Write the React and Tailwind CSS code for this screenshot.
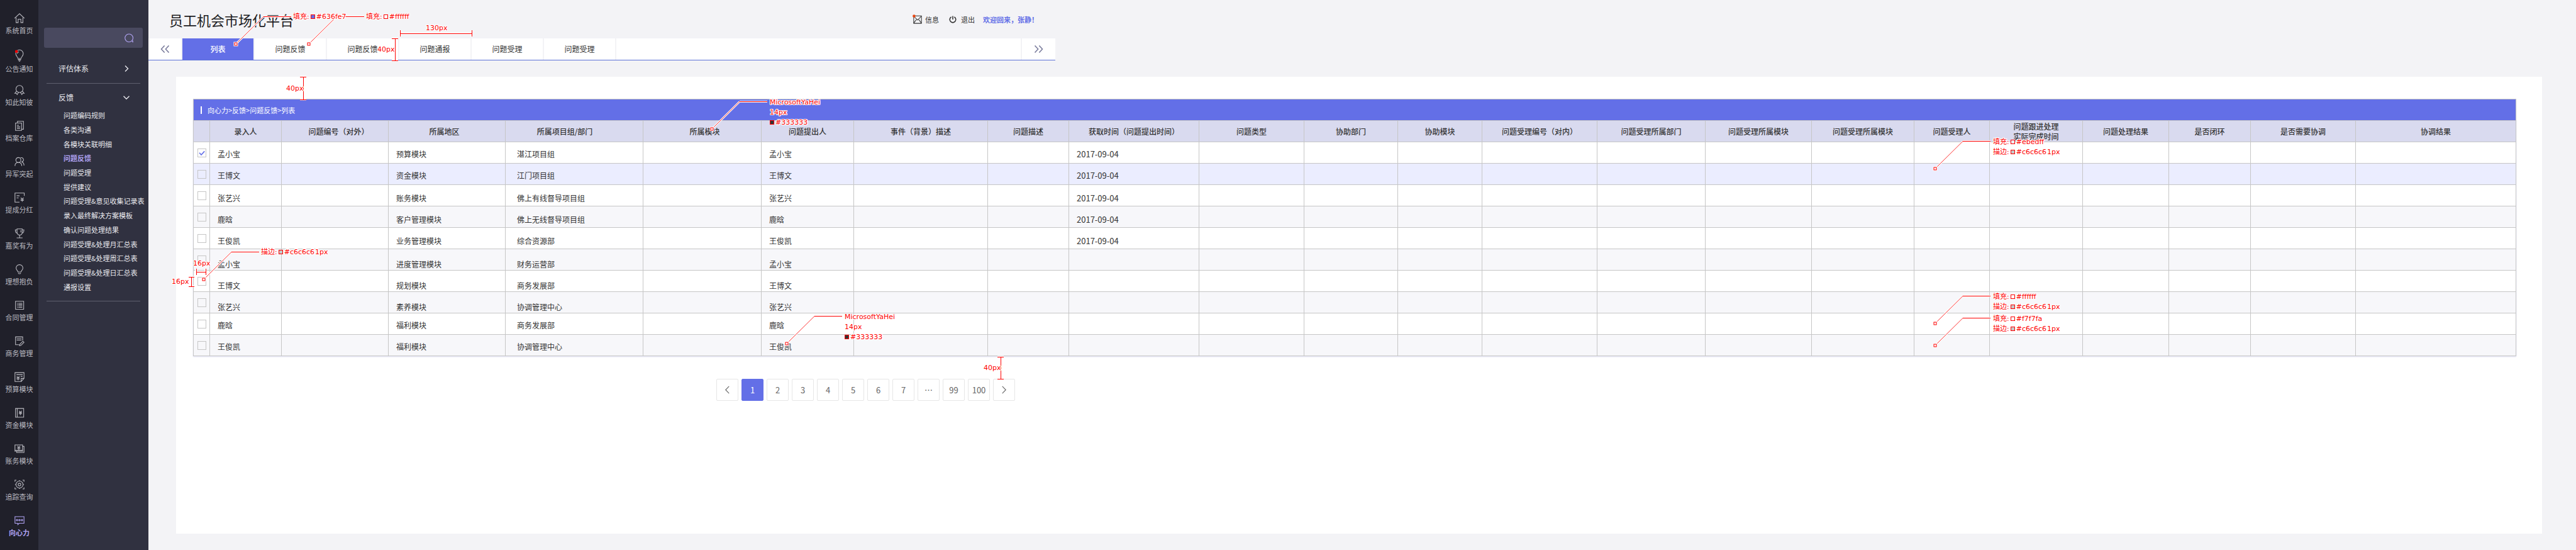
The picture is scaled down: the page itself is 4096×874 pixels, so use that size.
import React from "react";

const stroke = {
  fill: "none",
  stroke: "currentColor",
  strokeWidth: 1.2,
};

const Yen = ({ x, y }) => (
  <path d={`M${x - 2.4} ${y - 3.4}L${x} ${y - 0.6}L${x + 2.4} ${y - 3.4}M${x - 2.8} ${y - 0.4}H${x + 2.8}M${x - 2.8} ${y + 1.6}H${x + 2.8}M${x} ${y - 0.6}V${y + 3.8}`} />
);

const railIcons = {
  home: (
    <>
      <path d="M1.2 10.2 10 2l8.8 8.2" />
      <path d="M4 8.6V17.6H7.6V11.6H12.4V17.6H16V8.6" />
    </>
  ),
  notice: (
    <>
      <path d="M7.2 15.6C7.2 12.6 3.4 11.4 3.4 6.9A6.6 6.6 0 0 1 16.6 6.9C16.6 11.4 12.8 12.6 12.8 15.6Z" />
      <path d="M7.2 17.2H12.8M7.6 18.8H12.4M9 20.2H11" />
      <path d="M6 7A4 4 0 0 1 9 3.6" />
      <circle cx="4.6" cy="3" r="2.5" fill="#fe0000" stroke="none" />
    </>
  ),
  medal: (
    <>
      <circle cx="10" cy="8.2" r="6.2" />
      <path d="M5 12.2 1.8 15.8 4.6 15.9 5.8 18 8.4 14.2M15 12.2 18.2 15.8 15.4 15.9 14.2 18 11.6 14.2" />
    </>
  ),
  files: (
    <>
      <path d="M3 5H13.6V18H3Z" />
      <path d="M6.4 5V2H17V16H13.6" />
      <path d="M5.6 9H9M5.6 11.8H11M5.6 14.6H11" />
    </>
  ),
  people: (
    <>
      <circle cx="8" cy="7" r="4.4" />
      <path d="M2 17.4C2 13.6 4.4 11.4 8 11.4S14 13.6 14 17.4" />
      <path d="M11.6 3.2A3.8 3.8 0 1 1 13.6 10.4C16.4 10.8 18 13.4 18 16.8" />
    </>
  ),
  bonus: (
    <>
      <path d="M18.4 7V2H2V18H10" />
      <path d="M5 6.8H10M5 10.6H8.4" />
      <Yen x={14.8} y={13.4} />
    </>
  ),
  cup: (
    <>
      <path d="M5.6 2H14.8V7.4C14.8 11 12.6 12.8 10.2 12.8S5.6 11 5.6 7.4Z" />
      <path d="M5.6 3.6H2.6C2.6 7.4 3.6 9 6 9.4M14.8 3.6H17.8C17.8 7.4 16.8 9 14.4 9.4" />
      <path d="M10.2 12.8V17.8M5 17.8H15.4M12.4 4.2V8" />
    </>
  ),
  bulb: (
    <>
      <path d="M7.4 14.8C7.4 12.4 4 11.4 4 7.8A6 6 0 0 1 16 7.8C16 11.4 12.6 12.4 12.6 14.8Z" />
      <path d="M7.8 16.4C8.2 18.2 11.8 18.2 12.2 16.4" />
    </>
  ),
  list: (
    <>
      <path d="M3 3H17.4V17.2H3Z" />
      <path d="M5.6 6.6H7M8 6.6H15M5.6 9H7M8 9H15M5.6 11.4H7M8 11.4H15M5.6 13.8H7M8 13.8H15" />
    </>
  ),
  note: (
    <>
      <path d="M15.6 9V2.6H3V16.4H9.4" />
      <path d="M5 5.8H13.6M5 8.4H13.6" />
      <path d="M10.6 15.6 16 10.2 18 12.2 12.6 17.6 10 18.2Z" />
    </>
  ),
  budget: (
    <>
      <path d="M2 2.4H18V12.6L13 18H2Z" />
      <path d="M13 18V12.6H18M4.6 6H15.6M12 9H15.4" />
      <Yen x={7.6} y={12} />
    </>
  ),
  fund: (
    <>
      <path d="M3 2.4H17.4V17.8H3ZM6 2.4V17.8" />
      <Yen x={11.6} y={10} />
    </>
  ),
  account: (
    <>
      <path d="M2 3.4H15.4V14.4H2ZM2 12.8H15.4" />
      <path d="M15.4 6H18V16.6H5V14.4" />
      <Yen x={8.8} y={8.4} />
    </>
  ),
  track: (
    <>
      <circle cx="10" cy="10" r="6.2" />
      <circle cx="10" cy="10" r="2.4" />
      <path d="M2 5V2.2H4.6M15.4 2.2H18V5M2 15V17.8H4.6M15.4 17.8H18V15M10 2.2V3.8M10 16.2V17.8M2 10H3.8M16.2 10H18" />
    </>
  ),
  chat: (
    <>
      <path d="M2 3.4H18V15H9.4L7 17.4V15H2Z" />
      <circle cx="5.6" cy="9.4" r="1.3" />
      <circle cx="10" cy="9.4" r="1.3" />
      <circle cx="14.4" cy="9.4" r="1.3" />
    </>
  ),
};

const rail = [
  ["home", "系统首页"],
  ["notice", "公告通知"],
  ["medal", "知此知彼"],
  ["files", "档案仓库"],
  ["people", "异军突起"],
  ["bonus", "提成分红"],
  ["cup", "嘉奖有为"],
  ["bulb", "理想抱负"],
  ["list", "合同管理"],
  ["note", "商务管理"],
  ["budget", "预算模块"],
  ["fund", "资金模块"],
  ["account", "账务模块"],
  ["track", "追踪查询"],
  ["chat", "向心力"],
];

const submenu = [
  "问题编码规则",
  "各类沟通",
  "各模块关联明细",
  "问题反馈",
  "问题受理",
  "提供建议",
  "问题受理&意见收集记录表",
  "录入最终解决方案模板",
  "确认问题处理结果",
  "问题受理&处理月汇总表",
  "问题受理&处理周汇总表",
  "问题受理&处理日汇总表",
  "通报设置",
];

const tabs = ["列表", "问题反馈", "问题反馈", "问题通报", "问题受理", "问题受理"];

const columns = [
  { label: "", width: "w-[26px]" },
  { label: "录入人", width: "w-[114px]", key: "name" },
  { label: "问题编号（对外）", width: "w-[170px]", head: "pl-3" },
  { label: "所属地区", width: "w-[186px]", key: "area", head: "pr-2" },
  { label: "所属项目组/部门", width: "w-[219px]", key: "dept", head: "pr-[30px]", cell: "pl-[18px]" },
  { label: "所属模块", width: "w-[188px]", head: "pl-2" },
  { label: "问题提出人", width: "w-[147px]", key: "name" },
  { label: "事件（背景）描述", width: "w-[213px]" },
  { label: "问题描述", width: "w-[129px]" },
  { label: "获取时间（问题提出时间）", width: "w-[207px]", key: "date", cell: "pl-3 text-[13px]" },
  { label: "问题类型", width: "w-[167px]" },
  { label: "协助部门", width: "w-[149px]" },
  { label: "协助模块", width: "w-[134px]" },
  { label: "问题受理编号（对内）", width: "w-[183px]" },
  { label: "问题受理所属部门", width: "w-[172px]" },
  { label: "问题受理所属模块", width: "w-[169px]" },
  { label: "问题受理所属模块", width: "w-[163px]" },
  { label: "问题受理人", width: "w-[120px]" },
  { label: "问题跟进处理\n实际完成时间", width: "w-[148px]" },
  { label: "问题处理结果", width: "w-[137px]" },
  { label: "是否闭环", width: "w-[130px]" },
  { label: "是否需要协调", width: "w-[167px]" },
  { label: "协调结果", width: "" },
];

const white = "bg-white";
const grey = "bg-[#f7f7fa]";

const rows = [
  { name: "孟小宝", area: "预算模块", dept: "湛江项目组", date: "2017-09-04", bg: white, pad: "pt-1" },
  { name: "王博文", area: "资金模块", dept: "江门项目组", date: "2017-09-04", bg: "bg-[#ebedff]", pad: "pt-1" },
  { name: "张艺兴", area: "账务模块", dept: "佛上有线督导项目组", date: "2017-09-04", bg: white, pad: "pt-2" },
  { name: "鹿晗", area: "客户管理模块", dept: "佛上无线督导项目组", date: "2017-09-04", bg: grey, pad: "pt-2" },
  { name: "王俊凯", area: "业务管理模块", dept: "综合资源部", date: "2017-09-04", bg: white, pad: "pt-2" },
  { name: "孟小宝", area: "进度管理模块", dept: "财务运营部", bg: grey, pad: "pt-[14px]" },
  { name: "王博文", area: "规划模块", dept: "商务发展部", bg: white, pad: "pt-[14px]" },
  { name: "张艺兴", area: "素养模块", dept: "协调管理中心", bg: grey, pad: "pt-[14px]" },
  { name: "鹿晗", area: "福利模块", dept: "商务发展部", bg: white, pad: "pt-1" },
  { name: "王俊凯", area: "福利模块", dept: "协调管理中心", bg: grey, pad: "pt-1" },
];

const pages = ["1", "2", "3", "4", "5", "6", "7", "…", "99", "100"];

function Rail() {
  return (
    <nav aria-label="主导航" className="flex w-[61px] shrink-0 flex-col bg-[#20202a] pt-[19px]">
      {rail.map(([icon, label]) => {
        const active = icon === "chat";
        const tall = icon === "notice";
        return (
          <a
            key={label}
            href="#"
            className={`flex h-[57px] flex-col items-center ${active ? "font-bold text-[#b0a3f2]" : "text-[#b9b9c0]"}`}
          >
            <span className={`flex items-center justify-center ${tall ? "h-6" : "h-5"}`}>
              <svg viewBox="0 0 20 20" className="size-[18px] overflow-visible" {...stroke} aria-hidden="true">
                {railIcons[icon]}
              </svg>
            </span>
            <span className="mt-px whitespace-nowrap text-[11px] leading-4">{label}</span>
          </a>
        );
      })}
    </nav>
  );
}

function Sidebar() {
  return (
    <aside className="w-[175px] shrink-0 bg-[#303140] pt-11 text-[#e9e9ee]">
      <div className="mx-[9px] flex h-8 items-center rounded-[3px] bg-[#49495f] pr-3.5">
        <input aria-label="搜索" className="h-full min-w-0 flex-1 bg-transparent px-2 text-xs outline-none" />
        <button aria-label="开始搜索" className="text-[#b0a3f2]">
          <svg viewBox="0 0 16 16" className="size-[15px]" fill="none" stroke="currentColor" strokeWidth="1.2">
            <circle cx="7.6" cy="7.8" r="6.8" />
            <path d="M12.4 12.8 14.8 13.2M13 14.4 14.8 15" />
          </svg>
        </button>
      </div>
      <div className="mx-[13px] mt-[21px] border-b border-[#5f606f] pb-[11px]">
        <button className="flex h-6 w-full items-center justify-between pr-[17px] pl-[19px] text-xs">
          评估体系
          <svg viewBox="0 0 10 10" className="size-[10px]" {...stroke} strokeWidth="1.4">
            <path d="M3 0.5 7.5 5 3 9.5" />
          </svg>
        </button>
      </div>
      <div className="mx-[13px] mt-2.5 border-b border-[#5f606f] pb-[11px]">
        <button className="flex h-6 w-full items-center justify-between pr-[17px] pl-[19px] text-xs">
          反馈
          <svg viewBox="0 0 10 10" className="size-[10px]" {...stroke} strokeWidth="1.4">
            <path d="M0.5 2.8 5 7.2 9.5 2.8" />
          </svg>
        </button>
        <ul className="mt-[5px] flex h-[295px] flex-col pl-[27px] text-[11px]">
          {submenu.map((item) => (
            <li key={item} className="flex flex-1 items-center">
              <a
                href="#"
                className={`whitespace-nowrap leading-4 ${item === "问题反馈" ? "font-bold text-[#b0a3f2]" : ""}`}
              >
                {item}
              </a>
            </li>
          ))}
        </ul>
      </div>
    </aside>
  );
}

function Header() {
  return (
    <header className="flex h-[61px] w-[1442px] max-w-full items-center justify-between pr-[27px] pl-[33px]">
      <h1 className="text-[22px] leading-8 text-[#1c1c22]">员工机会市场化平台</h1>
      <div className="flex items-center text-[11px] leading-4 text-[#333]">
        <a href="#" className="flex items-center gap-[5px]">
          <svg viewBox="0 0 16 16" className="size-[14px] overflow-visible" {...stroke}>
            <path d="M1 1.5H15V15H1ZM1 2 8 9 15 2M1 14.5 6 8M15 14.5 10 8" />
            <circle cx="1.6" cy="1.6" r="2.6" fill="#e8440f" stroke="none" />
          </svg>
          信息
        </a>
        <a href="#" className="ml-4 flex items-center gap-[7px]">
          <svg viewBox="0 0 13 13" className="size-[12px]" {...stroke} strokeWidth="1.7">
            <path d="M4 2A5.2 5.2 0 1 0 9 2M6.5 0.5V6.5" />
          </svg>
          退出
        </a>
        <span className="ml-[13px] font-bold text-[#636fe7]">欢迎回来，张静！</span>
      </div>
    </header>
  );
}

function TabBar() {
  return (
    <div className="flex h-[35px] w-[1442px] max-w-full gap-0.5 border-b border-[#5b70d8] text-xs text-[#333]">
      <button aria-label="向左滚动" className="flex w-[52px] items-center justify-center bg-white text-[#7a7c9c]">
        <svg viewBox="0 0 18 14" className="h-3 w-[17px]" {...stroke} strokeWidth="1.8">
          <path d="M8 0.5 2 7 8 13.5M16 0.5 10 7 16 13.5" />
        </svg>
      </button>
      {tabs.map((tab, i) => (
        <button
          key={i}
          className={`w-[113px] shrink-0 ${i === 0 ? "bg-[#636fe7] font-medium text-white" : "bg-white"}`}
        >
          {tab}
        </button>
      ))}
      <div className="flex-1 bg-white" />
      <button aria-label="向右滚动" className="flex w-[53px] items-center justify-center bg-white text-[#7a7c9c]">
        <svg viewBox="0 0 18 14" className="h-3 w-[17px]" {...stroke} strokeWidth="1.8">
          <path d="M2 0.5 8 7 2 13.5M10 0.5 16 7 10 13.5" />
        </svg>
      </button>
    </div>
  );
}

function RowCheckbox({ row, index }) {
  return (
    <span className="mx-auto grid size-[14px]">
      <input
        type="checkbox"
        aria-label={`选择第${index + 1}行 ${row.name}`}
        defaultChecked={index === 0}
        className="peer col-start-1 row-start-1 size-[14px] appearance-none border border-[#c6c6c6]"
      />
      <svg
        viewBox="0 0 14 14"
        className="pointer-events-none invisible col-start-1 row-start-1 size-[14px] peer-checked:visible"
        fill="none"
        stroke="#636fe7"
        strokeWidth="1.6"
      >
        <path d="M3 6.8 6 10 11.2 4.4" />
      </svg>
    </span>
  );
}

function DataTable() {
  return (
    <table className="w-full table-fixed border-collapse text-xs leading-4 text-[#333] shadow-[0_1px_2px_#dcdcf0]">
      <colgroup>
        {columns.map((c, i) => (
          <col key={i} className={c.width} />
        ))}
      </colgroup>
      <thead>
        <tr className="h-[34px] bg-[#636fe7]">
          <th colSpan={columns.length} className="border border-[#c6c6c6] p-0 text-left font-normal text-white">
            <span className="ml-[11px] block border-l-2 border-white pl-[9px] text-[11px] leading-3">
              向心力&gt;反馈&gt;问题反馈&gt;列表
            </span>
          </th>
        </tr>
        <tr className="h-[34px] bg-[#d9daef]">
          {columns.map((c, i) => (
            <th
              key={i}
              className={`border border-[#c6c6c6] py-0 font-medium whitespace-pre-line ${c.head ?? "px-0"}`}
            >
              {c.label}
            </th>
          ))}
        </tr>
      </thead>
      <tbody>
        {rows.map((row, r) => (
          <tr key={r} className={`h-[34px] ${row.bg}`}>
            {columns.map((c, i) => (
              <td
                key={i}
                className={`border border-[#c6c6c6] pr-0 pb-0 ${i === 0 ? "pt-0" : row.pad} ${c.cell ?? (i === 0 ? "pl-0" : "pl-3")}`}
              >
                {i === 0 ? <RowCheckbox row={row} index={r} /> : c.key ? row[c.key] : null}
              </td>
            ))}
          </tr>
        ))}
      </tbody>
    </table>
  );
}

function Pagination() {
  const box = "flex h-[35px] w-[35px] items-center justify-center rounded-[2px] border";
  const idle = "border-[#e6e6e6] bg-white text-[#666]";
  return (
    <nav aria-label="分页" className="mt-9 ml-[832px] flex gap-[5px] text-[13px]">
      <button aria-label="上一页" className={`${box} ${idle}`}>
        <svg viewBox="0 0 12 14" className="h-[13px] w-[11px]" {...stroke}>
          <path d="M9 0.8 3 7 9 13.2" />
        </svg>
      </button>
      {pages.map((p) => (
        <button key={p} className={`${box} ${p === "1" ? "border-[#636fe7] bg-[#636fe7] text-white" : idle}`}>
          {p}
        </button>
      ))}
      <button aria-label="下一页" className={`${box} ${idle}`}>
        <svg viewBox="0 0 12 14" className="h-[13px] w-[11px]" {...stroke}>
          <path d="M3 0.8 9 7 3 13.2" />
        </svg>
      </button>
    </nav>
  );
}

// Callout leaders: marker centre [x, y]; each rises 44px to the right, then runs level.
const leaders = [
  [375, 70],
  [491, 70],
  [1132, 205],
  [324, 444],
  [1251, 546],
  [3077, 268],
  [3077, 514],
  [3077, 549],
];

const rulers = [
  "M636 53H750M636 48V58M750 48V58",
  "M628 61V96M623 61H633M623 96H633",
  "M482 122V158M477 122H487M477 158H487",
  "M312 432H327M312 427V437M327 427V437",
  "M304 440V455M300 440H309M300 455H309",
  "M1591 567V602M1586 567H1596M1586 602H1596",
];

const halo =
  "[text-shadow:1px_0_#fff,-1px_0_#fff,0_1px_#fff,0_-1px_#fff,1px_1px_#fff,-1px_-1px_#fff,1px_-1px_#fff,-1px_1px_#fff]";

const Swatch = ({ color }) => (
  <span className={`mr-0.5 ml-0.5 inline-block h-[7px] w-[7px] border border-[#fe0000] ${color}`} />
);

function Note({ at, children }) {
  return (
    <div
      className={`absolute whitespace-nowrap text-[11px] leading-4 text-[#fe0000] font-['DejaVu_Sans','Noto_Sans_CJK_SC',sans-serif] ${halo} ${at}`}
    >
      {children}
    </div>
  );
}

const Fill = ({ color, value }) => (
  <p>
    填充:
    <Swatch color={color} />
    {value}
  </p>
);

const Border = () => (
  <p>
    描边:
    <Swatch color="bg-[#c6c6c6]" />
    #c6c6c6<span className="ml-px">1px</span>
  </p>
);

const FontSpec = () => (
  <>
    <p>MicrosoftYaHei</p>
    <p>14px</p>
    <p>
      <span className="mr-0.5 inline-block h-[7px] w-[7px] border border-[#fe0000] bg-[#333]" />
      #333333
    </p>
  </>
);

function Annotations() {
  const paths = [
    ...leaders.map(([x, y]) => ({ thin: `M${x + 2} ${y - 2}L${x + 44} ${y - 43.5}`, bold: `M${x + 44} ${y - 43.5}h44` })),
    ...rulers.map((d) => ({ thin: "", bold: d })),
  ];
  return (
    <div className="pointer-events-none absolute inset-0">
      <svg className="absolute inset-0 size-full" fill="none">
        {paths.map((p, i) => (
          <g key={i}>
            <path d={p.thin + p.bold} stroke="#fff" strokeWidth="3" />
            {p.thin && <path d={p.thin} stroke="#fe0000" strokeWidth="0.8" />}
            <path d={p.bold} stroke="#fe0000" strokeWidth="1" shapeRendering="crispEdges" />
          </g>
        ))}
        {leaders.map(([x, y]) => (
          <g key={`${x}-${y}`}>
            <rect x={x - 3.5} y={y - 3.5} width="7" height="7" fill="#fff" />
            <rect x={x - 2} y={y - 2} width="4" height="4" fill="#fff" stroke="#fe0000" />
          </g>
        ))}
      </svg>
      <Note at="left-[466px] top-[19px]">
        <Fill color="bg-[#636fe7]" value="#636fe7" />
      </Note>
      <Note at="left-[582px] top-[19px]">
        <Fill color="bg-white" value="#ffffff" />
      </Note>
      <Note at="left-[677px] top-[37px]">130px</Note>
      <Note at="left-[600px] top-[71px]">40px</Note>
      <Note at="left-[455px] top-[133px]">40px</Note>
      <Note at="left-[1224px] top-[155px]">
        <FontSpec />
      </Note>
      <Note at="left-[415px] top-[393px]">
        <Border />
      </Note>
      <Note at="left-[307px] top-[411px]">16px</Note>
      <Note at="left-[273px] top-[440px]">16px</Note>
      <Note at="left-[1343px] top-[496px]">
        <FontSpec />
      </Note>
      <Note at="left-[1564px] top-[577px]">40px</Note>
      <Note at="left-[3169px] top-[218px]">
        <Fill color="bg-[#ebedff]" value="#ebedff" />
        <Border />
      </Note>
      <Note at="left-[3169px] top-[464px]">
        <Fill color="bg-white" value="#ffffff" />
        <Border />
      </Note>
      <Note at="left-[3169px] top-[499px]">
        <Fill color="bg-[#f7f7fa]" value="#f7f7fa" />
        <Border />
      </Note>
    </div>
  );
}

export default function App() {
  return (
    <div className="relative flex min-h-screen bg-[#f3f3f6] font-['Noto_Sans_CJK_SC',sans-serif]">
      <Rail />
      <Sidebar />
      <div className="flex min-w-0 flex-1 flex-col">
        <Header />
        <TabBar />
        <main className="mt-[26px] mr-[54px] mb-[26px] ml-11 flex-1 bg-white pt-[35px] pr-[41px] pl-[27px]">
          <DataTable />
          <Pagination />
        </main>
      </div>
      <Annotations />
    </div>
  );
}
